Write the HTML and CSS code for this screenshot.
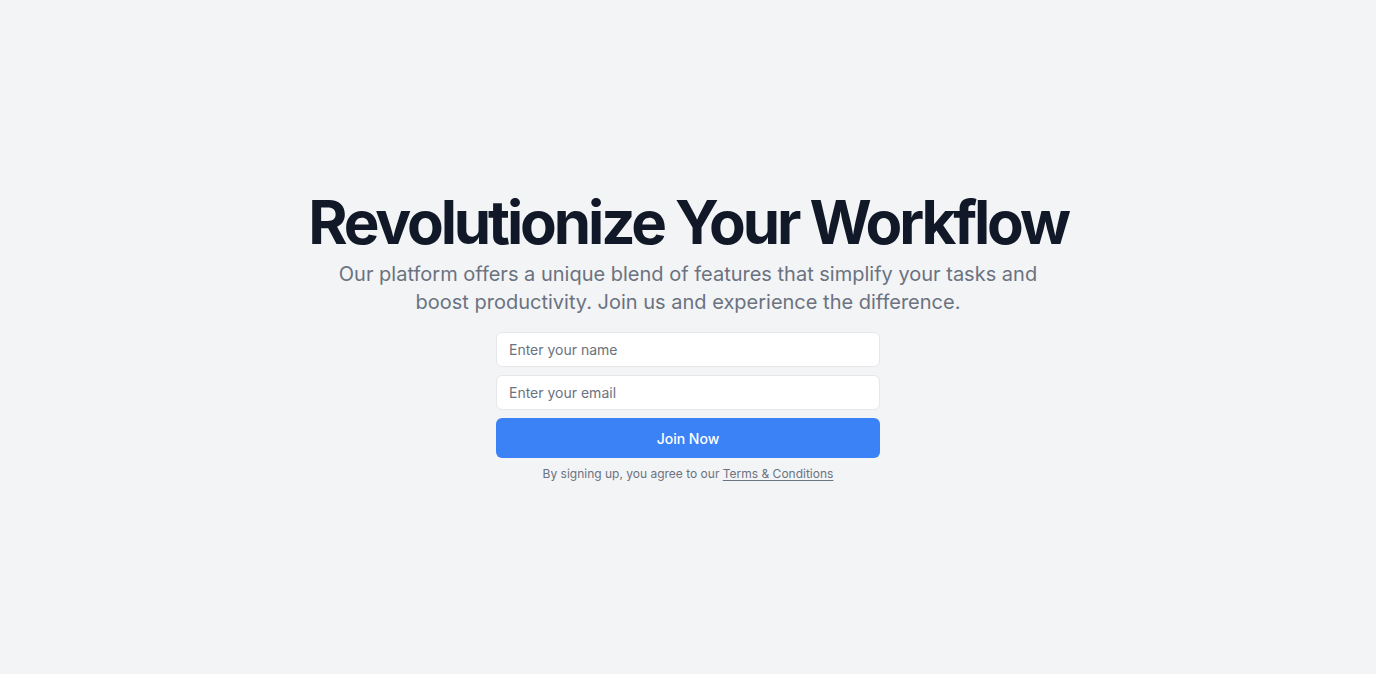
FILE: index.html
```html
<!DOCTYPE html>
<html lang="en">
<head>
<meta charset="utf-8">
<title>Revolutionize Your Workflow</title>
<link rel="stylesheet" href="styles.css">
</head>
<body>
<main class="hero">
  <div class="content">
    <h1 class="title">Revolutionize Your Workflow</h1>
    <p class="lead">Our platform offers a unique blend of features that simplify your tasks and boost productivity. Join us and experience the difference.</p>
    <form class="signup">
      <input class="field" type="text" placeholder="Enter your name">
      <input class="field" type="email" placeholder="Enter your email">
      <button class="submit" type="button">Join Now</button>
      <p class="note">By signing up, you agree to our <a class="terms" href="#">Terms &amp; Conditions</a></p>
    </form>
  </div>
</main>
</body>
</html>
```
FILE: styles.css
```css
* { box-sizing: border-box; }
html, body { margin: 0; padding: 0; }
body {
  background: #f3f4f6;
  font-family: Inter, "Noto Sans", sans-serif;
  color: #111827;
}
.hero {
  min-height: 674px;
  display: flex;
  align-items: center;
  justify-content: center;
}
.content {
  display: flex;
  flex-direction: column;
  align-items: center;
  text-align: center;
}
.title {
  margin: 0;
  font-size: 60px;
  line-height: 60px;
  font-weight: 700;
  letter-spacing: -0.052em;
  color: #111827;
}
.lead {
  margin: 8px 0 0;
  max-width: 700px;
  font-size: 20px;
  line-height: 28px;
  color: #6b7280;
}
.signup {
  margin-top: 16px;
  width: 384px;
  display: flex;
  flex-direction: column;
  gap: 8px;
}
.field {
  height: 35px;
  width: 100%;
  padding: 0 12px;
  border: 1px solid #e5e7eb;
  border-radius: 6px;
  background: #ffffff;
  font-family: inherit;
  font-size: 14px;
  color: #111827;
  outline: none;
}
.field::placeholder { color: #6b7280; }
.submit {
  height: 40px;
  width: 100%;
  border: 0;
  border-radius: 6px;
  background: #3b82f6;
  color: #ffffff;
  font-family: inherit;
  font-size: 14px;
  font-weight: 500;
}
.note {
  margin: 0;
  font-size: 12px;
  line-height: 16px;
  color: #6b7280;
}
.terms {
  color: #6b7280;
  text-decoration: underline;
  text-underline-offset: 2px;
}
```
